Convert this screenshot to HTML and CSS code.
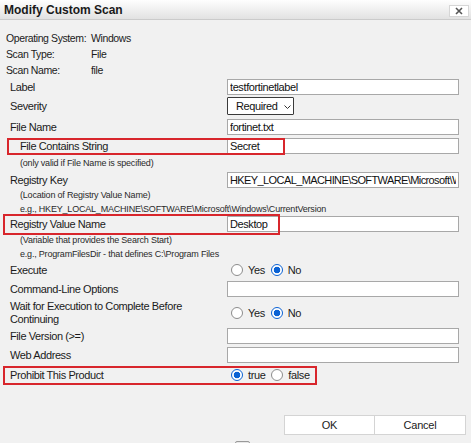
FILE: index.html
```html
<!DOCTYPE html>
<html lang="en">
<head>
    <meta charset="UTF-8">
    <meta name="viewport" content="width=device-width, initial-scale=1.0">
    <title>Modify Custom Scan</title>
    <link rel="stylesheet" href="styles.css">
</head>
<body>
    <div class="dialog">
        <div class="titlebar">
            <span class="title">Modify Custom Scan</span>
            <button class="close-btn" aria-label="Close">
                <svg width="8" height="8" viewBox="0 0 8 8"><path d="M1 1 L7 7 M7 1 L1 7" stroke="#555" stroke-width="1.6"/></svg>
            </button>
        </div>

        <div class="info">
            <span>Operating System:</span><span>Windows</span>
            <span>Scan Type:</span><span>File</span>
            <span>Scan Name:</span><span>file</span>
        </div>

        <div class="form">
            <div class="row">
                <label>Label</label>
                <input type="text" class="text-input" value="testfortinetlabel">
            </div>
            <div class="row row-select">
                <label>Severity</label>
                <span class="select-wrap">
                    <select class="select"><option>Required</option></select>
                    <svg class="chevron" width="7" height="4" viewBox="0 0 7 4"><path d="M0.5 0.5 L3.5 3.5 L6.5 0.5" fill="none" stroke="#333" stroke-width="1"/></svg>
                </span>
            </div>
            <div class="row row-filename">
                <label>File Name</label>
                <input type="text" class="text-input" value="fortinet.txt">
            </div>
            <div class="row row-contains">
                <label class="indent">File Contains String</label>
                <input type="text" class="text-input" value="Secret">
                <span class="highlight hl-contains"></span>
            </div>
            <div class="note note-first">(only valid if File Name is specified)</div>
            <div class="row row-regkey">
                <label>Registry Key</label>
                <input type="text" class="text-input tight" value="HKEY_LOCAL_MACHINE\SOFTWARE\Microsoft\Windows\CurrentVersion">
            </div>
            <div class="note">(Location of Registry Value Name)</div>
            <div class="note">e.g., HKEY_LOCAL_MACHINE\SOFTWARE\Microsoft\Windows\CurrentVersion</div>
            <div class="row">
                <label>Registry Value Name</label>
                <input type="text" class="text-input" value="Desktop">
                <span class="highlight hl-regvalue"></span>
            </div>
            <div class="note note-after">(Variable that provides the Search Start)</div>
            <div class="note">e.g., ProgramFilesDir - that defines C:\Program Files</div>
            <div class="row row-execute">
                <label>Execute</label>
                <div class="radios">
                    <label class="radio"><input type="radio" name="execute"><span>Yes</span></label>
                    <label class="radio"><input type="radio" name="execute" checked><span>No</span></label>
                </div>
            </div>
            <div class="row row-gap3">
                <label>Command-Line Options</label>
                <input type="text" class="text-input">
            </div>
            <div class="row row-wait">
                <label class="two-line">Wait for Execution to Complete Before Continuing</label>
                <div class="radios">
                    <label class="radio"><input type="radio" name="wait"><span>Yes</span></label>
                    <label class="radio"><input type="radio" name="wait" checked><span>No</span></label>
                </div>
            </div>
            <div class="row row-gap2">
                <label>File Version (&gt;=)</label>
                <input type="text" class="text-input">
            </div>
            <div class="row row-gap3">
                <label>Web Address</label>
                <input type="text" class="text-input">
            </div>
            <div class="row row-prohibit">
                <label>Prohibit This Product</label>
                <div class="radios">
                    <label class="radio"><input type="radio" name="prohibit" checked><span>true</span></label>
                    <label class="radio"><input type="radio" name="prohibit"><span>false</span></label>
                </div>
                <span class="highlight hl-prohibit"></span>
            </div>
        </div>

        <div class="actions">
            <button class="btn">OK</button>
            <button class="btn">Cancel</button>
        </div>
        <div class="bottom-check"></div>
    </div>
</body>
</html>
```

FILE: styles.css
```css
html, body {
    margin: 0;
    padding: 0;
}
body {
    width: 471px;
    height: 443px;
    overflow: hidden;
    background: #f1f1f1;
    font-family: 'Liberation Sans', Arial, sans-serif;
    font-size: 11px;
    letter-spacing: -0.4px;
    color: #1b1b1b;
}
.dialog {
    display: flex;
    flex-direction: column;
}
.titlebar {
    height: 19px;
    display: flex;
    justify-content: space-between;
    align-items: flex-start;
    background: linear-gradient(#fefefe, #e2e2e2);
    border-bottom: 1px solid #cbcbcb;
}
.title {
    font-weight: bold;
    font-size: 12px;
    letter-spacing: 0;
    line-height: 20px;
    padding-left: 4px;
    color: #1a1a1a;
}
.close-btn {
    width: 20px;
    height: 12px;
    margin: 5px 2px 0 0;
    padding: 0;
    background: #fff;
    border: 1px solid #d6d6d6;
    display: flex;
    align-items: center;
    justify-content: center;
}
.info {
    display: grid;
    grid-template-columns: 85px auto;
    grid-auto-rows: 16px;
    align-items: center;
    padding-left: 6px;
    margin-top: 10px;
    font-size: 10.5px;
}
.form {
    display: flex;
    flex-direction: column;
    margin-top: 1px;
}
.row {
    position: relative;
    display: grid;
    grid-template-columns: 227px 232px;
    align-items: center;
    height: 16px;
}
.row > label {
    padding-left: 10px;
}
.row > label.indent {
    padding-left: 20px;
}
.row-select {
    height: 18px;
    margin-top: 2px;
}
.row-filename {
    margin-top: 4px;
}
.row-contains {
    margin-top: 3px;
}
.row-regkey {
    margin-top: 2px;
}
.row-execute {
    margin-top: 1px;
}
.row-gap2 {
    margin-top: 2px;
}
.row-gap3 {
    margin-top: 3px;
}
.row-wait {
    height: 27px;
    margin-top: 2px;
}
.row-prohibit {
    height: 18px;
    margin-top: 3px;
}
.two-line {
    line-height: 13px;
    padding-right: 20px;
}
.text-input {
    box-sizing: border-box;
    width: 232px;
    height: 16px;
    margin: 0;
    padding: 0 2px;
    border: 1px solid #a8a8a8;
    background: #fff;
    font-family: inherit;
    font-size: 11px;
    letter-spacing: -0.4px;
    color: #111;
    outline: none;
}
.text-input.tight {
    letter-spacing: -0.6px;
}
.select-wrap {
    position: relative;
    width: 67px;
    height: 18px;
}
.select {
    appearance: none;
    box-sizing: border-box;
    width: 67px;
    height: 18px;
    margin: 0;
    padding: 0 0 0 8px;
    border: 1px solid #3a3a3a;
    border-radius: 1px;
    background: #fff;
    font-family: inherit;
    font-size: 11px;
    letter-spacing: -0.4px;
    color: #111;
}
.chevron {
    position: absolute;
    left: 57px;
    top: 8px;
    pointer-events: none;
}
.note {
    height: 14px;
    line-height: 14px;
    padding-left: 20px;
    font-size: 9px;
    letter-spacing: -0.2px;
    color: #2a2a2a;
    white-space: nowrap;
}
.note-first {
    margin-top: 2px;
}
.note-after {
    margin-top: 1px;
}
.radios {
    display: flex;
    align-items: center;
    padding-left: 4px;
}
.radio {
    display: flex;
    align-items: center;
    gap: 5px;
    margin-right: 6px;
}
.radio input {
    appearance: none;
    box-sizing: border-box;
    width: 12px;
    height: 12px;
    margin: 0;
    border: 1px solid #8c8c8c;
    border-radius: 50%;
    background: #fff;
}
.radio input:checked {
    border: 1.5px solid #0b62d4;
    background: radial-gradient(circle, #0b62d4 0 3px, #fff 3.6px);
}
.highlight {
    position: absolute;
    box-sizing: border-box;
    border: 2.5px solid #d8262c;
    pointer-events: none;
}
.hl-contains {
    left: 7px;
    top: 0;
    width: 278px;
    height: 17px;
}
.hl-regvalue {
    left: 3px;
    top: -2px;
    width: 277px;
    height: 21px;
}
.hl-prohibit {
    left: 3px;
    top: 0;
    width: 314px;
    height: 19px;
}
.actions {
    display: flex;
    justify-content: flex-end;
    margin-top: 31px;
    padding-right: 5px;
}
.btn {
    width: 91px;
    height: 20px;
    margin: 0;
    padding: 0;
    background: #fff;
    border: 1px solid #d4d4d4;
    font-family: inherit;
    font-size: 11px;
    letter-spacing: -0.2px;
    color: #1b1b1b;
}
.btn + .btn {
    border-left: none;
}
.bottom-check {
    width: 13px;
    height: 13px;
    margin: 6px 0 0 235px;
    border: 1px solid #9a9a9a;
    border-radius: 2px;
    background: #e8e8e8;
}
```
